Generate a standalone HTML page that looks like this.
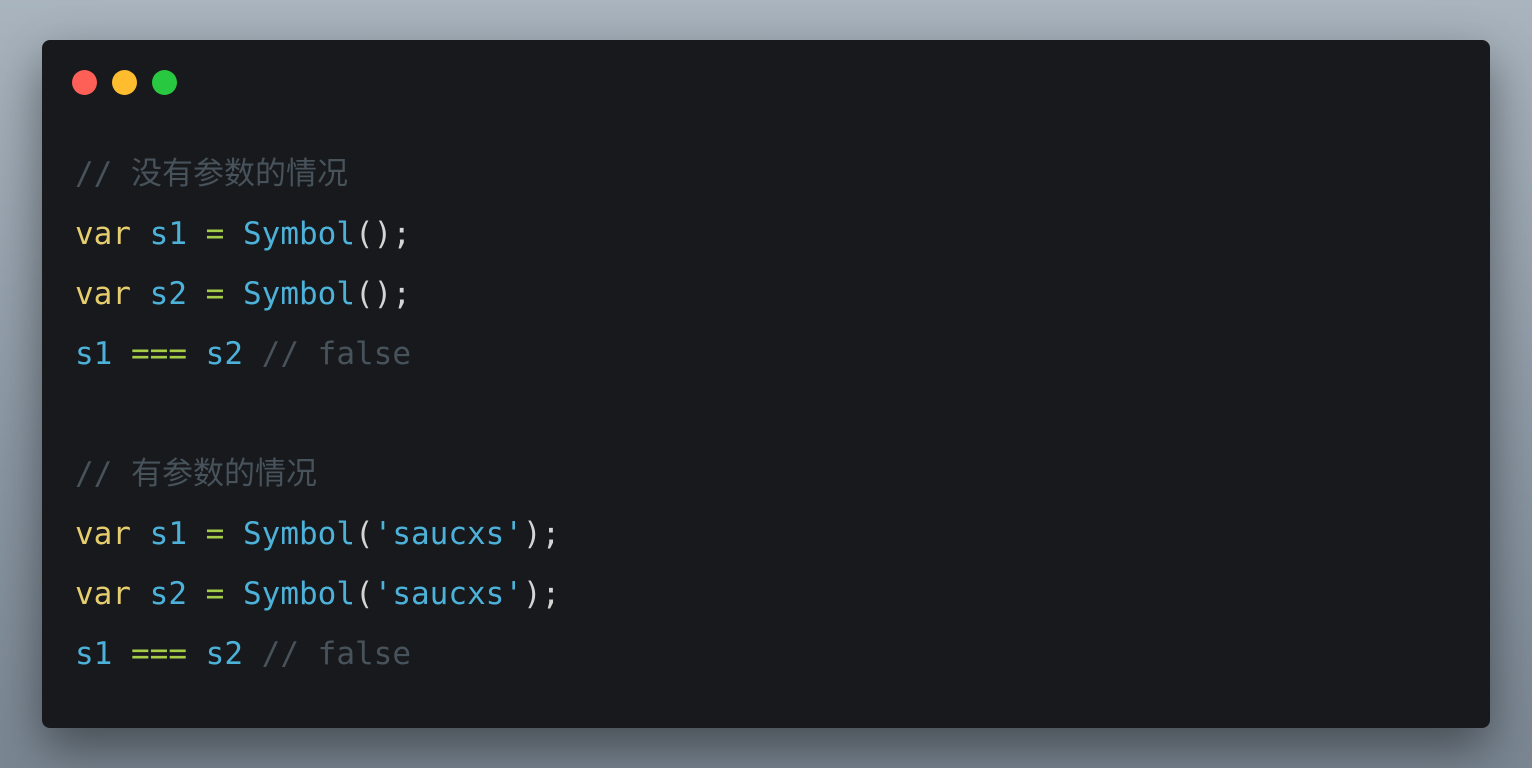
<!DOCTYPE html>
<html><head><meta charset="utf-8"><style>
html,body{margin:0;padding:0;width:1532px;height:768px;overflow:hidden}
body{background:linear-gradient(180deg,#a9b4be 0%,#8a96a2 60%,#7a8692 100%);position:relative}
.win{position:absolute;left:42px;top:40px;width:1448px;height:688px;background:#17191c;border-radius:8px;box-shadow:0 20px 50px rgba(0,0,0,.45)}
.d{position:absolute;top:30px;width:25px;height:25px;border-radius:50%}
pre{position:absolute;left:33px;top:104px;margin:0;font-family:"DejaVu Sans Mono","Noto Sans CJK SC",monospace;font-size:31px;line-height:60px;color:#d4d4d4}
.k{color:#e6cd6e}.v{color:#4db2da}.o{color:#a6cd48}.c{color:#47525b}.s{color:#4db2da}
</style></head><body>
<div class="win">
<div class="d" style="left:30px;background:#fe5f57"></div>
<div class="d" style="left:70px;background:#febc2e"></div>
<div class="d" style="left:110px;background:#28c840"></div>
<pre><span class="c">// 没有参数的情况</span>
<span class="k">var</span> <span class="v">s1</span> <span class="o">=</span> <span class="v">Symbol</span>();
<span class="k">var</span> <span class="v">s2</span> <span class="o">=</span> <span class="v">Symbol</span>();
<span class="v">s1</span> <span class="o">===</span> <span class="v">s2</span> <span class="c">// false</span>

<span class="c">// 有参数的情况</span>
<span class="k">var</span> <span class="v">s1</span> <span class="o">=</span> <span class="v">Symbol</span>(<span class="s">'saucxs'</span>);
<span class="k">var</span> <span class="v">s2</span> <span class="o">=</span> <span class="v">Symbol</span>(<span class="s">'saucxs'</span>);
<span class="v">s1</span> <span class="o">===</span> <span class="v">s2</span> <span class="c">// false</span></pre>
</div>
</body></html>
